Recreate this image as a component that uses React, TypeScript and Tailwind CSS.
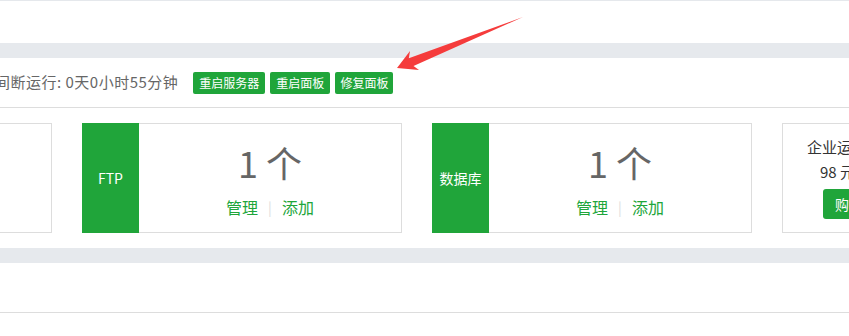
import React from "react";

const font = { fontFamily: '"Noto Sans CJK SC", "Noto Sans", sans-serif' };

function CountCard({ label }: { label: string }) {
  return (
    <div className="flex h-[110px] w-[320px] shrink-0 border border-[#dddddd] bg-white">
      <div className="-my-px -ml-px flex w-[57px] shrink-0 items-center justify-center bg-[#20a53a] text-[14px] text-white">
        {label}
      </div>
      <div className="flex flex-1 flex-col items-center pt-[14px]">
        <div className="text-[36px] leading-[48px] text-[#666666]">1 个</div>
        <div className="mt-[10px] flex items-center text-[16px] leading-[22px] text-[#20a53a]">
          <span>管理</span>
          <span className="mx-[10px] text-[14px] text-[#dddddd]">|</span>
          <span>添加</span>
        </div>
      </div>
    </div>
  );
}

export default function App() {
  return (
    <div className="relative w-full overflow-hidden bg-white" style={font}>
      <div className="h-[43px] border-t border-[#e5e8ec]" />
      <div className="h-[15px] bg-[#e6e9ed]" />
      <div className="bg-white">
        <div className="flex h-[50px] items-center border-b border-[#dddddd]">
          <span className="ml-[-5px] whitespace-nowrap text-[15px] tracking-[0.5px] text-[#666666]">
            间断运行: 0天0小时55分钟
          </span>
          <div className="ml-[15px] mt-[1px] flex gap-[5px]">
            <span className="rounded-[2px] bg-[#20a53a] px-[6px] text-[12px] leading-[22px] text-white">
              重启服务器
            </span>
            <span className="rounded-[2px] bg-[#20a53a] px-[6px] text-[12px] leading-[22px] text-white">
              重启面板
            </span>
            <span className="rounded-[2px] bg-[#20a53a] px-[5px] text-[12px] leading-[22px] text-white">
              修复面板
            </span>
          </div>
        </div>
        <div className="ml-[-268px] flex gap-[30px] py-[15px]">
          <div className="h-[110px] w-[320px] shrink-0 border border-[#dddddd] bg-white" />
          <CountCard label="FTP" />
          <CountCard label="数据库" />
          <div className="flex h-[110px] w-[320px] shrink-0 flex-col border border-[#dddddd] bg-white pl-[24px] pt-[12px]">
            <div className="whitespace-nowrap text-[15px] leading-[22px] text-[#333333]">
              企业运维版 专业版
            </div>
            <div className="ml-[13px] mt-[3px] whitespace-nowrap text-[15px] leading-[22px] text-[#333333]">
              98 元/月
            </div>
            <div className="ml-[16px] mt-[6px] w-[70px] rounded-[3px] bg-[#20a53a] px-[12px] text-[14px] leading-[30px] text-white">
              购买
            </div>
          </div>
        </div>
      </div>
      <div className="h-[15px] bg-[#e6e9ed]" />
      <div className="h-[50px] border-b border-[#dddddd]" />
      <div className="h-[23px]" />
      <svg
        className="pointer-events-none absolute left-0 top-0"
        width="849"
        height="336"
        viewBox="0 0 849 336"
      >
        <polygon
          points="523,17 413.5,66 419,70 397,68 410,51 408.8,58.3"
          fill="#f53c3c"
        />
      </svg>
    </div>
  );
}
